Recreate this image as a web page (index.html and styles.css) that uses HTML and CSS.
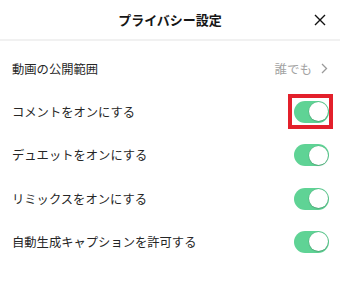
FILE: index.html
```html
<!DOCTYPE html>
<html lang="ja">
<head>
<meta charset="utf-8">
<link rel="stylesheet" href="styles.css">
</head>
<body>
<div class="page">
  <header class="header">
    <div></div>
    <h1 class="title">プライバシー設定</h1>
    <div class="close">
      <svg width="12" height="12" viewBox="0 0 12 12"><path d="M1 1L11 11M11 1L1 11" stroke="#111" stroke-width="1.4" fill="none"/></svg>
    </div>
  </header>
  <ul class="list">
    <li class="row">
      <span class="label">動画の公開範囲</span>
      <span class="value">誰でも
        <svg class="chev" width="7" height="11" viewBox="0 0 7 11"><path d="M1 1L5.5 5.5L1 10" stroke="#9a9a9a" stroke-width="1.3" fill="none"/></svg>
      </span>
    </li>
    <li class="row">
      <span class="label">コメントをオンにする</span>
      <span class="toggle-wrap">
        <span class="toggle"><span class="knob"></span></span>
        <span class="highlight"></span>
      </span>
    </li>
    <li class="row">
      <span class="label">デュエットをオンにする</span>
      <span class="toggle"><span class="knob"></span></span>
    </li>
    <li class="row">
      <span class="label">リミックスをオンにする</span>
      <span class="toggle"><span class="knob"></span></span>
    </li>
    <li class="row">
      <span class="label">自動生成キャプションを許可する</span>
      <span class="toggle"><span class="knob"></span></span>
    </li>
  </ul>
</div>
</body>
</html>
```
FILE: styles.css
```css
html, body {
  margin: 0;
  padding: 0;
  background: #fff;
}
body {
  font-family: "Noto Sans CJK JP", "Noto Sans", sans-serif;
  color: #222;
}
.page {
  width: 340px;
}
.header {
  height: 39px;
  display: grid;
  grid-template-columns: 1fr auto 1fr;
  align-items: center;
  border-bottom: 2px solid #f1f1f1;
}
.title {
  margin: 0;
  font-size: 13px;
  font-weight: 700;
  color: #161616;
  line-height: 1;
}
.close {
  justify-self: end;
  padding-right: 14px;
  display: flex;
  align-items: center;
  padding-top: 1px;
}
.list {
  list-style: none;
  margin: 0;
  padding: 6px 0 0 0;
}
.row {
  height: 43.3px;
  display: flex;
  align-items: center;
  justify-content: space-between;
  padding: 0 11px 0 12px;
}
.label {
  font-size: 12.3px;
  color: #262626;
}
.value {
  display: flex;
  align-items: center;
  gap: 9px;
  font-size: 12.5px;
  color: #a3a3a3;
  padding-right: 1px;
}
.chev {
  display: block;
}
.toggle-wrap {
  position: relative;
  display: flex;
}
.toggle {
  width: 35px;
  height: 22px;
  border-radius: 11px;
  background: #5fd395;
  display: flex;
  align-items: center;
  justify-content: flex-end;
  padding-right: 1.5px;
  box-sizing: border-box;
}
.knob {
  width: 19px;
  height: 19px;
  border-radius: 50%;
  background: #fff;
  box-shadow: 0 0 0 0.5px rgba(0,0,0,0.12), 0 1px 1.5px rgba(0,0,0,0.15);
}
.highlight {
  position: absolute;
  left: -6px;
  right: -4px;
  top: -7px;
  bottom: -6px;
  border: 4px solid #e3202b;
}
```
